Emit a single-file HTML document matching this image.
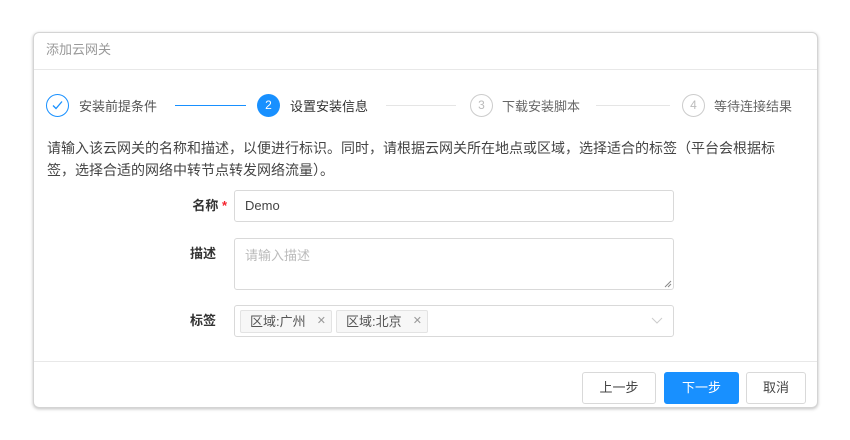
<!DOCTYPE html>
<html><head><meta charset="utf-8"><style>
*{box-sizing:border-box;margin:0;padding:0}
body{width:850px;height:440px;background:#fff;font-family:"Liberation Sans","Noto Sans CJK SC",sans-serif;position:relative;overflow:hidden;color:#333}
.modal{position:absolute;left:33px;top:32px;width:785px;height:376px;border:1px solid #d4d4d4;border-radius:6px;box-shadow:0 1px 3px rgba(0,0,0,.25);background:#fff}
.a{position:absolute}
.title{left:12px;top:6px;font-size:13px;color:#999}
.hl{left:0;right:0;height:1px;background:#e8e8e8}
.circ{width:23px;height:23px;border-radius:50%;top:61px;font-size:12px;text-align:center;line-height:21px}
.st{top:63px;font-size:13px;white-space:nowrap}
.ln{top:72px;height:1px}
.desc{left:13px;top:104px;font-size:14px;line-height:22px;color:#444;width:735px}
.lab{font-size:13px;font-weight:bold;color:#333;text-align:right;width:60px;white-space:nowrap}
.inp{left:200px;width:440px;border:1px solid #d9d9d9;border-radius:3px;font-size:13px}
.tag{position:absolute;top:4px;height:23px;border:1px solid #e3e3e3;background:#f7f7f7;border-radius:2px;font-size:13px;color:#555;line-height:21px;padding-left:9px;white-space:nowrap;width:92px}
.tag span{position:absolute;right:5px;top:0;color:#999;font-size:11px}
.btn{top:339px;height:32px;border:1px solid #d9d9d9;border-radius:3px;font-size:13px;text-align:center;line-height:30px;color:#444;background:#fff}
</style></head><body>
<div class="modal">
<div class="a title">添加云网关</div>
<div class="a hl" style="top:36px"></div>
<div class="a circ" style="left:12px;border:1px solid #1890ff;color:#1890ff">
<svg width="13" height="13" viewBox="0 0 13 13" style="margin-top:4px"><path d="M2 6.5l3 3 6-7" fill="none" stroke="#1890ff" stroke-width="1.3"/></svg></div>
<div class="a st" style="left:45px;color:#555">安装前提条件</div>
<div class="a ln" style="left:141px;width:71px;background:#1890ff"></div>
<div class="a circ" style="left:223px;background:#1890ff;color:#fff;line-height:23px">2</div>
<div class="a st" style="left:256px;color:#333">设置安装信息</div>
<div class="a ln" style="left:352px;width:70px;background:#e5e5e5"></div>
<div class="a circ" style="left:436px;border:1px solid #ccc;color:#bbb">3</div>
<div class="a st" style="left:468px;color:#666">下载安装脚本</div>
<div class="a ln" style="left:562px;width:74px;background:#e5e5e5"></div>
<div class="a circ" style="left:648px;border:1px solid #ccc;color:#bbb">4</div>
<div class="a st" style="left:680px;color:#666">等待连接结果</div>
<div class="a desc">请输入该云网关的名称和描述，以便进行标识。同时，请根据云网关所在地点或区域，选择适合的标签（平台会根据标签，选择合适的网络中转节点转发网络流量）。</div>
<div class="a lab" style="left:133px;top:162px">名称<span style="color:#f5222d"> *</span></div>
<div class="a inp" style="top:157px;height:32px;padding:7px 10px;color:#444">Demo</div>
<div class="a lab" style="left:122px;top:210px">描述</div>
<div class="a inp" style="top:205px;height:52px;padding:6px 10px;color:#bbb">请输入描述
<svg class="a" style="right:1px;bottom:1px" width="8" height="8"><path d="M7 1L1 7M7 4L4 7" stroke="#888" stroke-width="1"/></svg></div>
<div class="a lab" style="left:122px;top:277px">标签</div>
<div class="a inp" style="top:272px;height:32px">
<div class="tag" style="left:5px">区域:广州<span>✕</span></div>
<div class="tag" style="left:101px">区域:北京<span>✕</span></div>
<svg class="a" style="right:10px;top:11px" width="12" height="8"><path d="M1 1l5 5 5-5" fill="none" stroke="#ccc" stroke-width="1"/></svg>
</div>
<div class="a hl" style="top:328px"></div>
<div class="a btn" style="left:548px;width:74px">上一步</div>
<div class="a btn" style="left:630px;width:75px;background:#1890ff;border-color:#1890ff;color:#fff">下一步</div>
<div class="a btn" style="left:712px;width:60px">取消</div>
</div>
</body></html>
